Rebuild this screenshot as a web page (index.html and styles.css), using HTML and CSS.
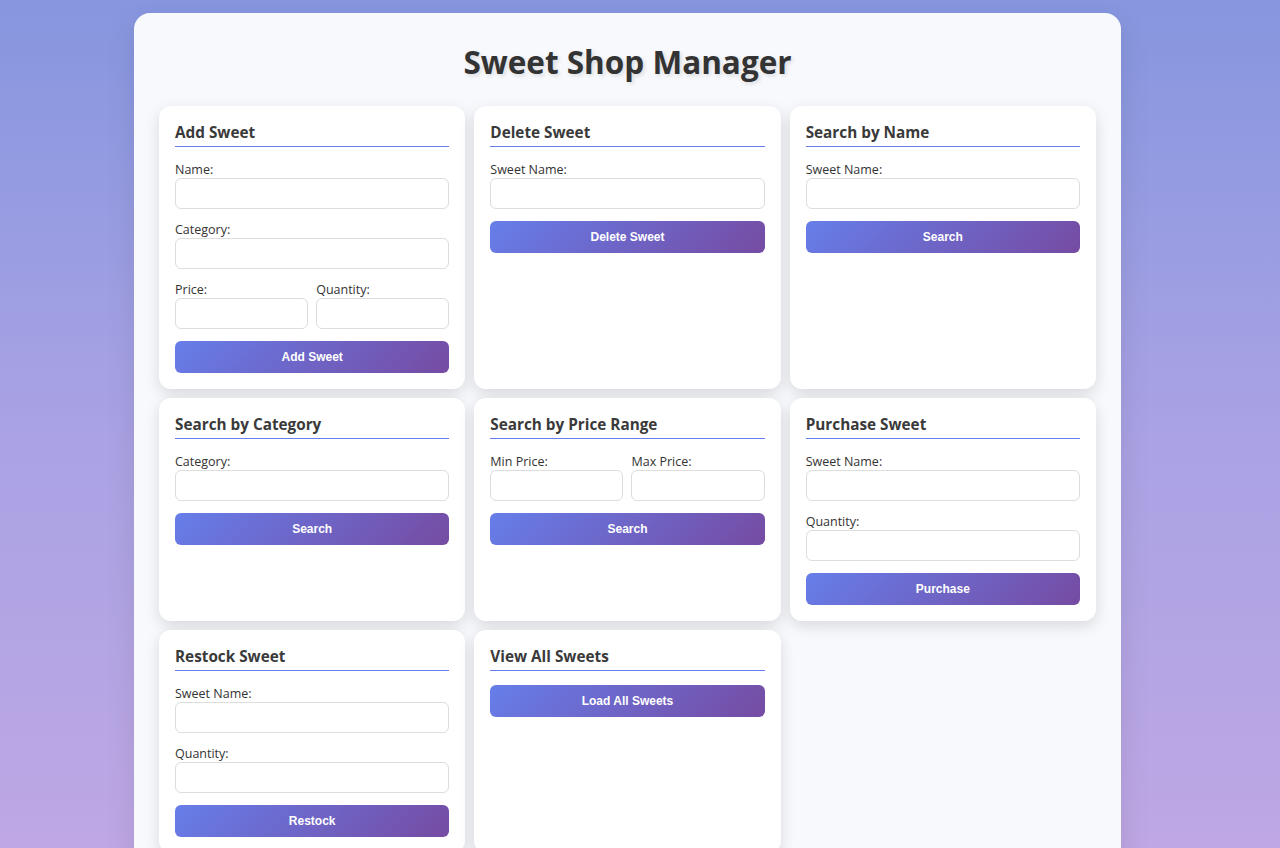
FILE: index.html
```html
<!DOCTYPE html>
<html lang="en">
<head>
<meta charset="utf-8">
<title>Sweet Shop Manager</title>
<link rel="stylesheet" href="styles.css">
</head>
<body>
<div class="container">
  <h1>Sweet Shop Manager</h1>
  <div class="grid">
    <section class="card">
      <h2>Add Sweet</h2>
      <div class="group"><label>Name:</label><input type="text"></div>
      <div class="group"><label>Category:</label><input type="text"></div>
      <div class="row">
        <div class="group"><label>Price:</label><input type="text"></div>
        <div class="group"><label>Quantity:</label><input type="text"></div>
      </div>
      <button>Add Sweet</button>
    </section>
    <section class="card">
      <h2>Delete Sweet</h2>
      <div class="group"><label>Sweet Name:</label><input type="text"></div>
      <button>Delete Sweet</button>
    </section>
    <section class="card">
      <h2>Search by Name</h2>
      <div class="group"><label>Sweet Name:</label><input type="text"></div>
      <button>Search</button>
    </section>
    <section class="card">
      <h2>Search by Category</h2>
      <div class="group"><label>Category:</label><input type="text"></div>
      <button>Search</button>
    </section>
    <section class="card">
      <h2>Search by Price Range</h2>
      <div class="row">
        <div class="group"><label>Min Price:</label><input type="text"></div>
        <div class="group"><label>Max Price:</label><input type="text"></div>
      </div>
      <button>Search</button>
    </section>
    <section class="card">
      <h2>Purchase Sweet</h2>
      <div class="group"><label>Sweet Name:</label><input type="text"></div>
      <div class="group"><label>Quantity:</label><input type="text"></div>
      <button>Purchase</button>
    </section>
    <section class="card">
      <h2>Restock Sweet</h2>
      <div class="group"><label>Sweet Name:</label><input type="text"></div>
      <div class="group"><label>Quantity:</label><input type="text"></div>
      <button>Restock</button>
    </section>
    <section class="card">
      <h2>View All Sweets</h2>
      <button>Load All Sweets</button>
    </section>
  </div>
</div>
</body>
</html>
```

FILE: styles.css
```css
* { box-sizing: border-box; }
html, body { height: 100%; }
body {
  margin: 0;
  font-family: "Open Sans", "Noto Sans", sans-serif;
  background: linear-gradient(180deg, #8696df 0%, #a9a2e4 50%, #bea7e4 100%);
  background-attachment: fixed;
  color: #333;
  overflow: hidden;
}
.container {
  width: 987px;
  margin: 13px 0 0 134px;
  background: #f8f9fd;
  border-radius: 16px;
  padding: 30px 25px 25px;
  box-shadow: 0 10px 30px rgba(0,0,0,0.1);
  min-height: 900px;
}
h1 {
  margin: 0 0 25px;
  text-align: center;
  font-size: 31.5px;
  line-height: 38px;
  font-weight: 700;
  color: #333;
  text-shadow: 2px 2px 4px rgba(0,0,0,0.12);
}
.grid {
  display: grid;
  grid-template-columns: repeat(3, 1fr);
  column-gap: 9px;
  row-gap: 9px;
}
.card {
  background: #fff;
  border-radius: 12px;
  padding: 16px;
  box-shadow: 0 5px 15px rgba(0,0,0,0.13);
}
h2 {
  margin: 0 0 15px;
  font-size: 15.3px;
  line-height: 20px;
  font-weight: 700;
  color: #3a3a3a;
  padding-bottom: 4px;
  border-bottom: 1px solid #667eea;
}
.group { margin-bottom: 13px; }
label {
  display: block;
  font-size: 12.5px;
  line-height: 16px;
  color: #333;
}
input {
  display: block;
  width: 100%;
  height: 31px;
  border: 1px solid #ddd;
  border-radius: 6px;
  background: #fff;
  font: inherit;
  padding: 0 8px;
}
.row {
  display: grid;
  grid-template-columns: 1fr 1fr;
  gap: 8px;
}
button {
  display: block;
  width: 100%;
  height: 32px;
  border: none;
  border-radius: 6px;
  background: linear-gradient(135deg, #667eea 0%, #764ba2 100%);
  color: #fff;
  font-family: "Liberation Sans", Arial, sans-serif;
  font-weight: 700;
  font-size: 12px;
  margin-top: -1px;
}
```
